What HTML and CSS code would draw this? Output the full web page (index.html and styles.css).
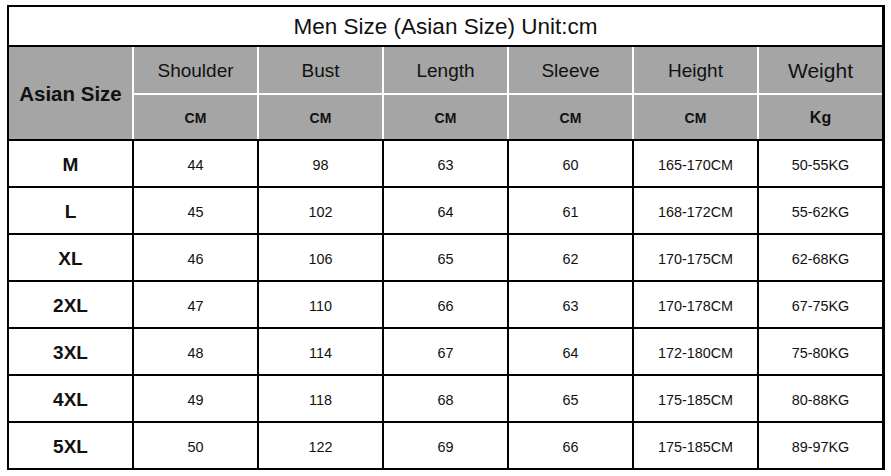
FILE: index.html
```html
<!DOCTYPE html>
<html>
<head>
<meta charset="utf-8">
<link rel="stylesheet" href="styles.css">
</head>
<body>
<div class="chart">
  <div class="title">Men Size (Asian Size) Unit:cm</div>
  <div class="head">
    <div class="hc size">Asian Size</div>
    <div class="hc name">Shoulder</div>
    <div class="hc name">Bust</div>
    <div class="hc name">Length</div>
    <div class="hc name">Sleeve</div>
    <div class="hc name">Height</div>
    <div class="hc name big">Weight</div>
    <div class="hc unit">CM</div>
    <div class="hc unit">CM</div>
    <div class="hc unit">CM</div>
    <div class="hc unit">CM</div>
    <div class="hc unit">CM</div>
    <div class="hc unit kg">Kg</div>
  </div>
  <div class="body">
    <div class="c sz">M</div><div class="c">44</div><div class="c">98</div><div class="c">63</div><div class="c">60</div><div class="c">165-170CM</div><div class="c">50-55KG</div>
    <div class="c sz">L</div><div class="c">45</div><div class="c">102</div><div class="c">64</div><div class="c">61</div><div class="c">168-172CM</div><div class="c">55-62KG</div>
    <div class="c sz">XL</div><div class="c">46</div><div class="c">106</div><div class="c">65</div><div class="c">62</div><div class="c">170-175CM</div><div class="c">62-68KG</div>
    <div class="c sz">2XL</div><div class="c">47</div><div class="c">110</div><div class="c">66</div><div class="c">63</div><div class="c">170-178CM</div><div class="c">67-75KG</div>
    <div class="c sz">3XL</div><div class="c">48</div><div class="c">114</div><div class="c">67</div><div class="c">64</div><div class="c">172-180CM</div><div class="c">75-80KG</div>
    <div class="c sz">4XL</div><div class="c">49</div><div class="c">118</div><div class="c">68</div><div class="c">65</div><div class="c">175-185CM</div><div class="c">80-88KG</div>
    <div class="c sz">5XL</div><div class="c">50</div><div class="c">122</div><div class="c">69</div><div class="c">66</div><div class="c">175-185CM</div><div class="c">89-97KG</div>
  </div>
</div>
</body>
</html>
```
FILE: styles.css
```css
html, body {
  margin: 0;
  background: #fff;
}
body {
  padding: 5px 0 0 7px;
  font-family: "Liberation Sans", Arial, sans-serif;
  color: #111;
}
.chart {
  width: 873px;
  border: 2px solid #000;
  border-right-width: 3px;
  background: #fff;
}
.title {
  box-sizing: border-box;
  height: 40px;
  padding-top: 2px;
  border-bottom: 2px solid #000;
  display: flex;
  align-items: center;
  justify-content: center;
  font-size: 22.5px;
}
.head {
  display: grid;
  grid-template-columns: repeat(7, 123px);
  grid-template-rows: 46px 44px;
  gap: 2px;
  background: #fff;
  border-bottom: 2px solid #000;
}
.hc {
  box-sizing: border-box;
  padding-top: 2px;
  background: #a5a5a5;
  display: flex;
  align-items: center;
  justify-content: center;
}
.size {
  grid-row: span 2;
  font-weight: bold;
  font-size: 20.5px;
}
.name {
  font-size: 19px;
}
.name.big {
  font-size: 21px;
}
.unit {
  font-weight: bold;
  font-size: 14px;
}
.unit.kg {
  font-size: 16px;
}
.body {
  display: grid;
  grid-template-columns: repeat(7, 123px);
  grid-auto-rows: 45px;
  gap: 2px;
  background: #000;
}
.c {
  box-sizing: border-box;
  padding-top: 3px;
  background: #fff;
  display: flex;
  align-items: center;
  justify-content: center;
  font-size: 14.4px;
}
.c.sz {
  font-weight: bold;
  font-size: 19px;
}
```
